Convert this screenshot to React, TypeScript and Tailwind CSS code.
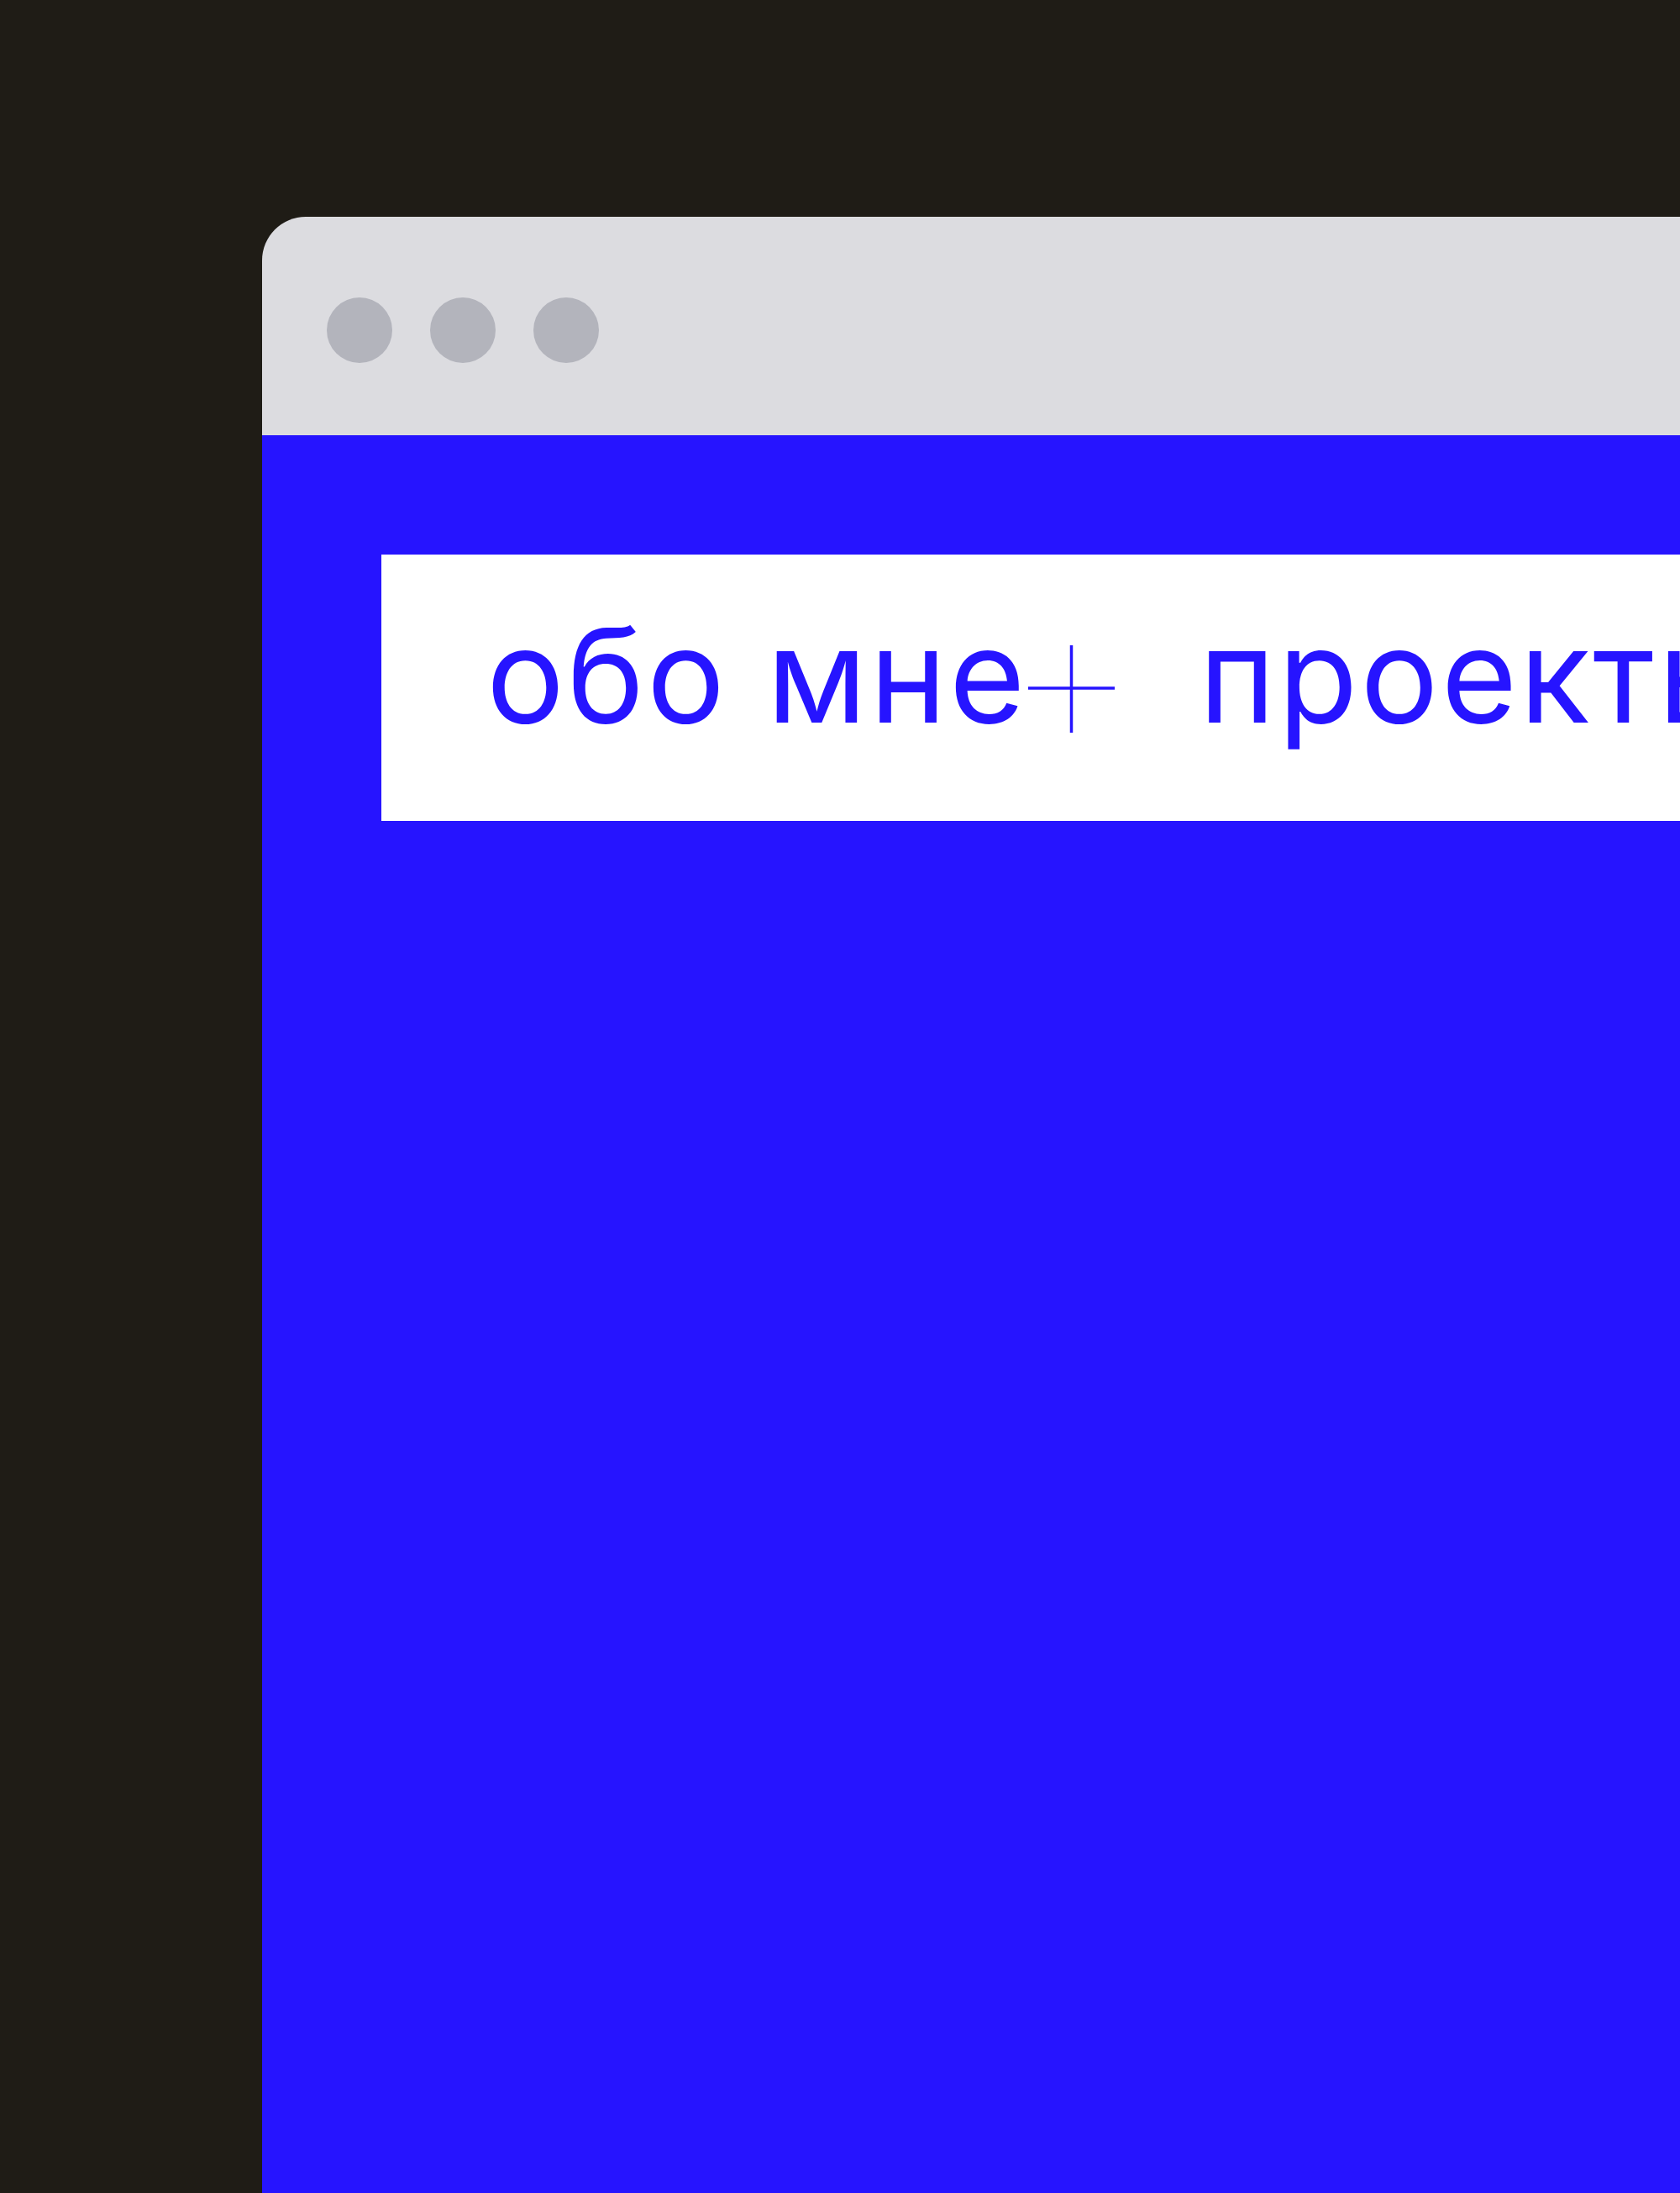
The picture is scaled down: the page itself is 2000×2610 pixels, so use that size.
import React from "react";

const navItems = [
  { label: "обо мне", plus: true },
  { label: "проекты", plus: false },
];

const PlusMark = () => (
  <svg width="103" height="104" viewBox="0 0 103 104" className="shrink-0 mb-[9px]">
    <path d="M51.5 0v104M0 51h103" stroke="#2614ff" strokeWidth="3.5" fill="none" />
  </svg>
);

export default function App() {
  return (
    <div className="w-full h-[2610px] bg-[#1f1c16] overflow-hidden pt-[258px] pl-[312px]">
      {/* Browser window */}
      <div className="h-full rounded-tl-[52px] overflow-hidden flex flex-col">
        {/* Title bar */}
        <div className="h-[260px] shrink-0 bg-[#dcdce0] flex items-center gap-[45px] pl-[77px] pt-[10px]">
          <span className="w-[78px] h-[78px] rounded-full bg-[#b3b4bc]" />
          <span className="w-[78px] h-[78px] rounded-full bg-[#b3b4bc]" />
          <span className="w-[78px] h-[78px] rounded-full bg-[#b3b4bc]" />
        </div>

        {/* Page body */}
        <div className="flex-1 bg-[#2614ff] pt-[142px] pl-[142px]">
          <nav className="h-[317px] bg-white flex items-start pt-[66px] pl-[125px] overflow-hidden">
            <ul className="flex items-end gap-[100px] whitespace-nowrap font-['Inter',sans-serif] text-[155px] leading-none text-[#2614ff] tracking-[0.02em]">
              {navItems.map((item) => (
                <li key={item.label} className="flex items-end gap-[1px]">
                  <span>{item.label}</span>
                  {item.plus && <PlusMark />}
                </li>
              ))}
            </ul>
          </nav>
        </div>
      </div>
    </div>
  );
}
